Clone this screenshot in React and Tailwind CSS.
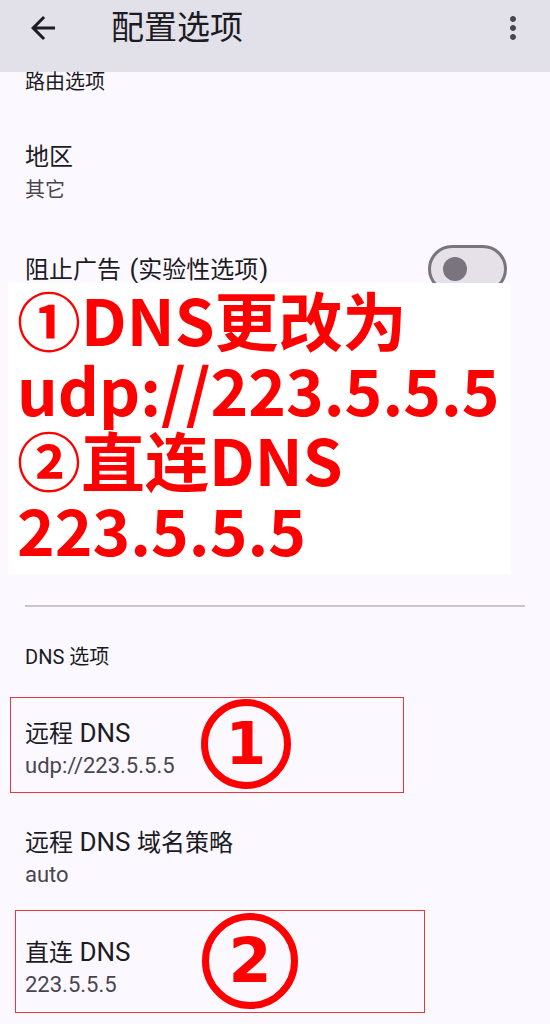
import React from "react";

const ui = { fontFamily: "Roboto, 'Noto Sans CJK SC', sans-serif" };
const red = { fontFamily: "'Noto Sans CJK SC', 'Noto Sans', sans-serif" };
const digit = { fontFamily: "'DejaVu Sans', sans-serif" };

function L({ children }) {
  return <span className="text-[26px]">{children}</span>;
}

function Item({ title, sub, children }) {
  return (
    <div className="relative pl-[25px]">
      <div className="h-[30px] text-[24px] leading-[30px] text-[#1c1b1f] whitespace-nowrap">{title}</div>
      <div className="mt-[5px] h-[26px] text-[22px] leading-[26px] text-[#49454f]">{sub}</div>
      {children}
    </div>
  );
}

function Circled({ n, className }) {
  return (
    <div
      className={
        "absolute flex items-center justify-center rounded-full border-[7px] border-[#ff0000] text-[#ff0000] font-bold " +
        className
      }
      style={digit}
    >
      {n}
    </div>
  );
}

export default function App() {
  return (
    <div className="w-[550px] h-[1024px] overflow-hidden bg-[#fbf8ff] relative" style={ui}>
      {/* header */}
      <div className="h-[72px] bg-[#e2e0e9] flex items-start pt-[10px]">
        <svg className="ml-[25px] w-[36px] h-[36px]" viewBox="0 0 24 24" fill="#1c1b1f">
          <path d="M20 11H7.83l5.59-5.59L12 4l-8 8 8 8 1.41-1.41L7.83 13H20v-2z" />
        </svg>
        <div className="ml-[50px] text-[33px] leading-[36px] text-[#1c1b1f]">配置选项</div>
        <svg className="ml-auto mr-[19px] w-[36px] h-[36px]" viewBox="0 0 24 24" fill="#49454f">
          <path d="M12 8c1.1 0 2-.9 2-2s-.9-2-2-2-2 .9-2 2 .9 2 2 2zm0 2c-1.1 0-2 .9-2 2s.9 2 2 2 2-.9 2-2-.9-2-2-2zm0 6c-1.1 0-2 .9-2 2s.9 2 2 2 2-.9 2-2-.9-2-2-2z" />
        </svg>
      </div>

      <div className="pl-[25px] h-[20px] text-[20px] leading-[20px] text-[#1c1b1f]">路由选项</div>

      <div className="pt-[50px]">
        <div className="pl-[25px]">
          <div className="h-[30px] text-[24px] leading-[30px] text-[#1c1b1f]">地区</div>
          <div className="mt-[5px] h-[26px] text-[20px] leading-[26px] text-[#49454f]">其它</div>
        </div>
      </div>

      {/* toggle row */}
      <div className="mt-[42px] h-[48px] flex items-center pl-[25px] pr-[43px]">
        <div className="text-[24px] leading-[30px] text-[#1c1b1f] whitespace-nowrap">
          阻止广告<span className="text-[26px] pl-[2px]"> (</span>实验性选项<span className="text-[26px] pl-[1px]">)</span>
        </div>
        <div className="ml-auto w-[79px] h-[48px] rounded-full border-[3px] border-[#79747e] bg-[#e6e0e9] flex items-center pl-[12px]">
          <div className="w-[24px] h-[24px] rounded-full bg-[#79747e]" />
        </div>
      </div>

      {/* hidden area under overlay */}
      <div className="h-[312px]" />

      <div className="mx-[25px] h-[2px] bg-[#cac4d0]" />

      <div className="mt-[38px] pl-[25px] h-[24px] text-[20px] leading-[24px] text-[#1c1b1f]">DNS 选项</div>

      <div className="mt-[49px]">
        <Item title={<>远程<L> DNS</L></>} sub="udp://223.5.5.5">
          <div className="absolute left-[10px] top-[-21px] w-[394px] h-[96px] border-[1.5px] border-[#e5383b]" />
          <Circled n="1" className="left-[201px] top-[-19px] w-[90px] h-[90px] text-[58px] leading-none" />
        </Item>
      </div>

      <div className="mt-[48px]">
        <Item title={<>远程<L> DNS </L>域名策略</>} sub="auto" />
      </div>

      <div className="mt-[49px]">
        <Item title={<>直连<L> DNS</L></>} sub="223.5.5.5">
          <div className="absolute left-[15px] top-[-27px] w-[410px] h-[103px] border-[1.5px] border-[#e5383b]" />
          <Circled n="2" className="left-[202px] top-[-24px] w-[96px] h-[96px] text-[62px] leading-none" />
        </Item>
      </div>

      {/* annotation overlay */}
      <div
        className="absolute left-[8px] top-[283px] w-[503px] h-[291px] bg-white pl-[9px] text-[#ff0000] font-bold text-[64px] leading-[70px] whitespace-nowrap"
        style={red}
      >
        <div>①DNS更改为</div>
        <div>udp://223.5.5.5</div>
        <div>②直连DNS</div>
        <div>223.5.5.5</div>
      </div>
    </div>
  );
}
